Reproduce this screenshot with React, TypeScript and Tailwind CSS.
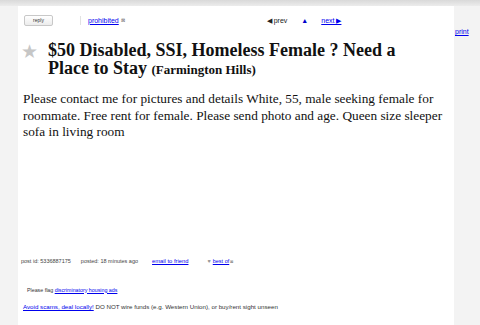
export default function App() {
  return (
    <div className="relative w-[480px] h-[325px] overflow-hidden bg-[#f4f4f4] font-['Liberation_Sans',sans-serif]">
      <div className="h-[6px] bg-gradient-to-b from-[#d9d9d9] to-[#ececec]" />
      <div className="flex h-[319px]">
        <div className="w-[18px] bg-[#f3f3f3]" />
        <div className="flex-1 bg-white flex flex-col">
          <div className="flex items-center h-[24px] pt-[4px]">
            <button className="ml-[6px] w-[29px] h-[11px] rounded-[2px] border border-[#c8c8c8] bg-gradient-to-b from-white to-[#ececec] text-[5px] leading-none text-[#333]">
              reply
            </button>
            <span className="ml-[27px] w-[8px] h-[9px] border-l border-[#e2e2e2]" />
            <a className="text-[7px] text-[#0000ee] underline leading-none">prohibited</a>
            <span className="ml-[2px] text-[5px] text-[#666] leading-none">⊠</span>
            <div className="ml-[142px] flex items-center text-[7px] leading-none">
              <span className="text-[#222]">◀ prev</span>
              <span className="ml-[14px] text-[#00c]">▲</span>
              <a className="ml-[13px] text-[#00e] underline">next ▶</a>
            </div>
          </div>
          <div className="flex items-start mt-[11px]">
            <span className="ml-[3px] mt-[1px] text-[19px] leading-none text-[#c6c6c6]">★</span>
            <h1 className="ml-[10px] font-['Liberation_Serif',serif] font-bold text-[18px] leading-[18px] text-[#111]">
              $50 Disabled, SSI, Homeless Female ? Need a<br />
              Place to Stay <span className="text-[13px]">(Farmington Hills)</span>
            </h1>
          </div>
          <p className="mt-[12px] ml-[5px] mr-[2px] font-['Liberation_Serif',serif] text-[13.3px] leading-[16.5px] text-[#111]">
            Please contact me for pictures and details White, 55, male seeking female for roommate. Free rent for female. Please send photo and age. Queen size sleeper sofa in living room
          </p>
          <div className="flex-1" />
          <div className="flex items-center ml-[3px] text-[5.5px] leading-none text-[#444]">
            <span>post id: 5336887175</span>
            <span className="ml-[10px]">posted: 18 minutes ago</span>
            <a className="ml-[14px] text-[5.8px] text-[#00e] underline">email to friend</a>
            <span className="ml-[19px] text-[#999]">♥</span>
            <a className="ml-[2px] text-[#00e] underline">best of</a>
            <span className="ml-[1px] text-[4px] text-[#666]">⊠</span>
          </div>
          <div className="mt-[23px] ml-[9px] text-[5.3px] leading-none text-[#333]">
            Please flag <a className="text-[#00e] underline">discriminatory housing ads</a>
          </div>
          <div className="mt-[11px] mb-[15px] ml-[5px] text-[6.2px] leading-none text-[#333] whitespace-nowrap">
            <a className="text-[#00e] underline">Avoid scams, deal locally!</a> DO NOT wire funds (e.g. Western Union), or buy/rent sight unseen
          </div>
        </div>
        <div className="w-[26px] bg-[#f3f3f3] relative">
          <a className="absolute left-[1px] top-[22px] text-[7px] leading-none text-[#00e] underline">print</a>
        </div>
      </div>
    </div>
  );
}
